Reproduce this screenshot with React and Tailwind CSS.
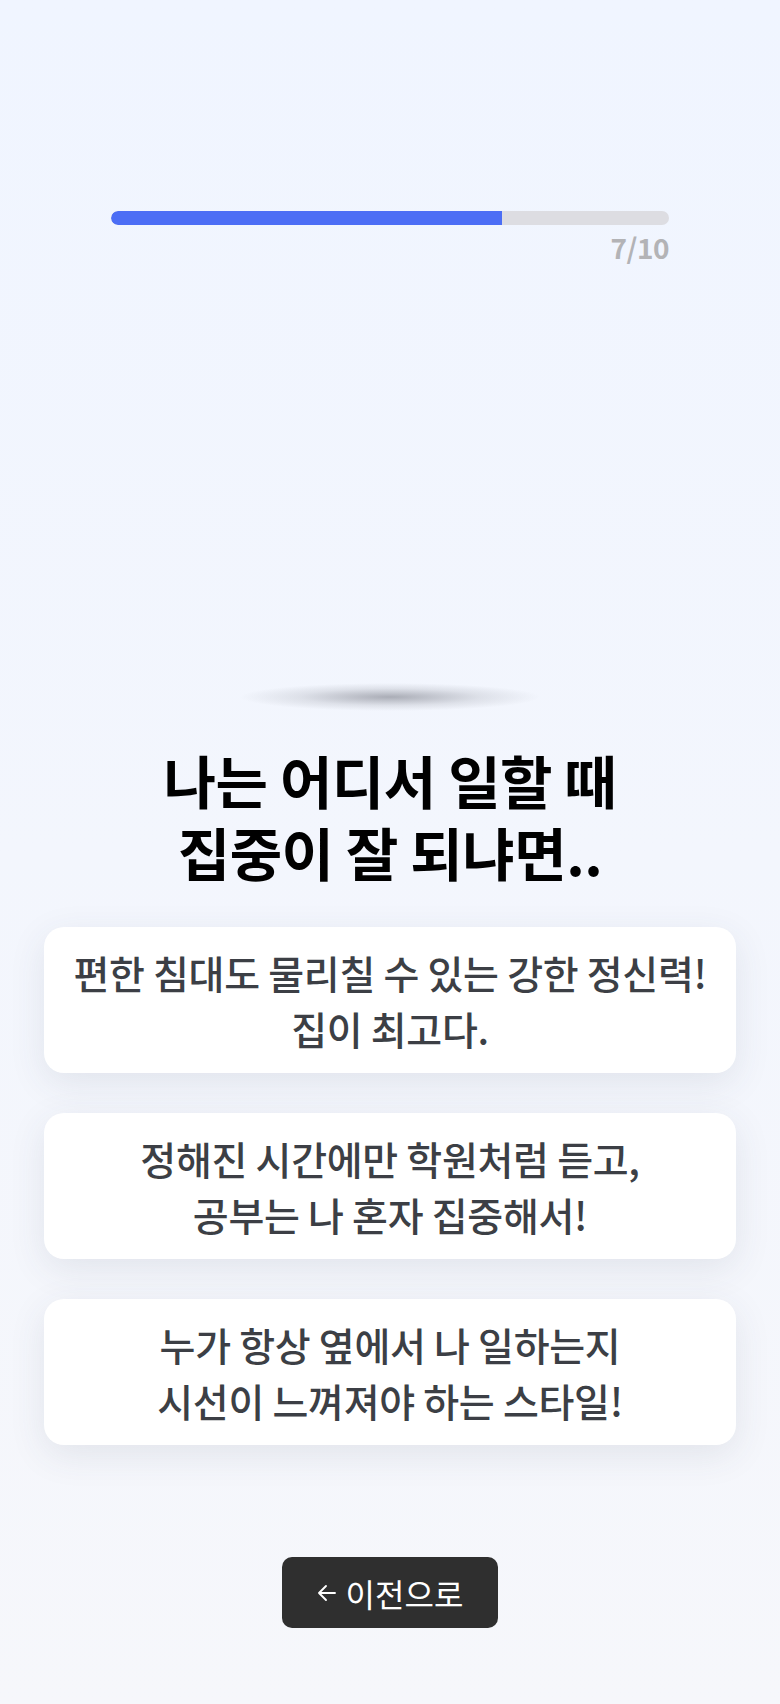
import React from "react";

const ANSWERS = [
  ["편한 침대도 물리칠 수 있는 강한 정신력!", "집이 최고다."],
  ["정해진 시간에만 학원처럼 듣고,", "공부는 나 혼자 집중해서!"],
  ["누가 항상 옆에서 나 일하는지", "시선이 느껴져야 하는 스타일!"],
];

const STEP = 7;
const TOTAL = 10;

export default function App() {
  const progress = (STEP / TOTAL) * 100;

  return (
    <div
      className="min-h-screen w-full bg-gradient-to-b from-[#f0f5ff] to-[#f6f7fb] flex flex-col items-center"
      style={{ fontFamily: '"Noto Sans CJK KR", "Noto Sans", sans-serif' }}
    >
      {/* progress */}
      <div className="w-[558px] mt-[211px]">
        <div className="h-[14px] w-full rounded-full bg-[#dddde2] overflow-hidden">
          <div
            className="h-full bg-[#4c6ef5] rounded-l-full"
            style={{ width: `${progress}%` }}
          />
        </div>
        <p className="mt-[6px] text-right text-[28px] leading-[32px] font-bold text-[#b3b3b6] tracking-[-0.5px]">
          {STEP}/{TOTAL}
        </p>
      </div>

      {/* floor shadow under the question */}
      <div className="mt-[420px] w-[300px] h-[28px] bg-[radial-gradient(closest-side,rgba(70,72,84,0.42),rgba(70,72,84,0.12)_60%,transparent)]" />

      <h1 className="mt-[32px] text-center text-[57px] leading-[72px] font-bold text-black tracking-[-0.5px]">
        <span className="block">나는 어디서 일할 때</span>
        <span className="block">집중이 잘 되냐면..</span>
      </h1>

      <div className="mt-[40px] w-[692px] flex flex-col gap-[40px]">
        {ANSWERS.map((lines, i) => (
          <button
            key={i}
            className="h-[146px] w-full rounded-[20px] bg-white shadow-[0_10px_36px_rgba(60,64,90,0.10)] flex flex-col items-center justify-center text-[39px] leading-[56px] font-medium text-[#3c3f45] tracking-[-0.3px]"
          >
            {lines.map((l) => (
              <span key={l}>{l}</span>
            ))}
          </button>
        ))}
      </div>

      <button className="mt-[112px] w-[216px] h-[71px] rounded-[10px] bg-[#2f2f2f] text-white text-[32px] leading-none flex items-center justify-center gap-[9px]">
        <svg
          width="20"
          height="20"
          viewBox="0 0 20 20"
          fill="none"
          stroke="currentColor"
          strokeWidth="1.9"
          strokeLinecap="round"
          strokeLinejoin="round"
        >
          <path d="M18 10H2M9 3l-7 7 7 7" />
        </svg>
        <span>이전으로</span>
      </button>
    </div>
  );
}
